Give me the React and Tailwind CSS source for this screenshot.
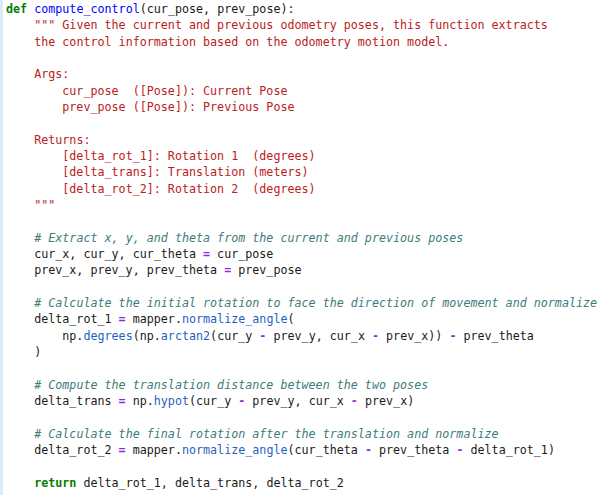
import React from "react";

const K = ({ children }) => <span className="font-bold text-[#008000]">{children}</span>;
const F = ({ children }) => <span className="text-[#1f5fbf]">{children}</span>;
const D = ({ children }) => <span className="text-[#0000ff]">{children}</span>;
const O = ({ children }) => <span className="font-bold text-[#8a2be2]">{children}</span>;
const S = ({ children }) => <span className="text-[#ba2121]">{children}</span>;
const C = ({ children }) => <span className="italic text-[#3d7b7b]">{children}</span>;

const Line = ({ children }) => <div className="h-[16.34px] whitespace-pre">{children}</div>;

const App = () => {
  return (
    <div className="flex h-[495px] w-[606px] overflow-hidden bg-white">
      <div className="w-[3px] shrink-0 bg-[#d9eafb]" />
      <div className="pl-[3px] pt-[1px] font-['DejaVu_Sans_Mono',monospace] text-[11.7px] leading-[16.34px] text-[#1a1a1a]">
        <Line>
          <K>def</K> <D>compute_control</D>(cur_pose, prev_pose):
        </Line>
        <Line>
          {"    "}
          <S>""" Given the current and previous odometry poses, this function extracts</S>
        </Line>
        <Line>
          {"    "}
          <S>the control information based on the odometry motion model.</S>
        </Line>
        <Line> </Line>
        <Line>
          {"    "}
          <S>Args:</S>
        </Line>
        <Line>
          {"        "}
          <S>cur_pose  ([Pose]): Current Pose</S>
        </Line>
        <Line>
          {"        "}
          <S>prev_pose ([Pose]): Previous Pose</S>
        </Line>
        <Line> </Line>
        <Line>
          {"    "}
          <S>Returns:</S>
        </Line>
        <Line>
          {"        "}
          <S>[delta_rot_1]: Rotation 1  (degrees)</S>
        </Line>
        <Line>
          {"        "}
          <S>[delta_trans]: Translation (meters)</S>
        </Line>
        <Line>
          {"        "}
          <S>[delta_rot_2]: Rotation 2  (degrees)</S>
        </Line>
        <Line>
          {"    "}
          <S>"""</S>
        </Line>
        <Line> </Line>
        <Line>
          {"    "}
          <C># Extract x, y, and theta from the current and previous poses</C>
        </Line>
        <Line>
          {"    cur_x, cur_y, cur_theta "}
          <O>=</O> cur_pose
        </Line>
        <Line>
          {"    prev_x, prev_y, prev_theta "}
          <O>=</O> prev_pose
        </Line>
        <Line> </Line>
        <Line>
          {"    "}
          <C># Calculate the initial rotation to face the direction of movement and normalize</C>
        </Line>
        <Line>
          {"    delta_rot_1 "}
          <O>=</O> mapper.<F>normalize_angle</F>(
        </Line>
        <Line>
          {"        np."}
          <F>degrees</F>(np.<F>arctan2</F>(cur_y <O>-</O> prev_y, cur_x <O>-</O> prev_x)) <O>-</O> prev_theta
        </Line>
        <Line>{"    )"}</Line>
        <Line> </Line>
        <Line>
          {"    "}
          <C># Compute the translation distance between the two poses</C>
        </Line>
        <Line>
          {"    delta_trans "}
          <O>=</O> np.<F>hypot</F>(cur_y <O>-</O> prev_y, cur_x <O>-</O> prev_x)
        </Line>
        <Line> </Line>
        <Line>
          {"    "}
          <C># Calculate the final rotation after the translation and normalize</C>
        </Line>
        <Line>
          {"    delta_rot_2 "}
          <O>=</O> mapper.<F>normalize_angle</F>(cur_theta <O>-</O> prev_theta <O>-</O> delta_rot_1)
        </Line>
        <Line> </Line>
        <Line>
          {"    "}
          <K>return</K> delta_rot_1, delta_trans, delta_rot_2
        </Line>
      </div>
    </div>
  );
};

export default App;
